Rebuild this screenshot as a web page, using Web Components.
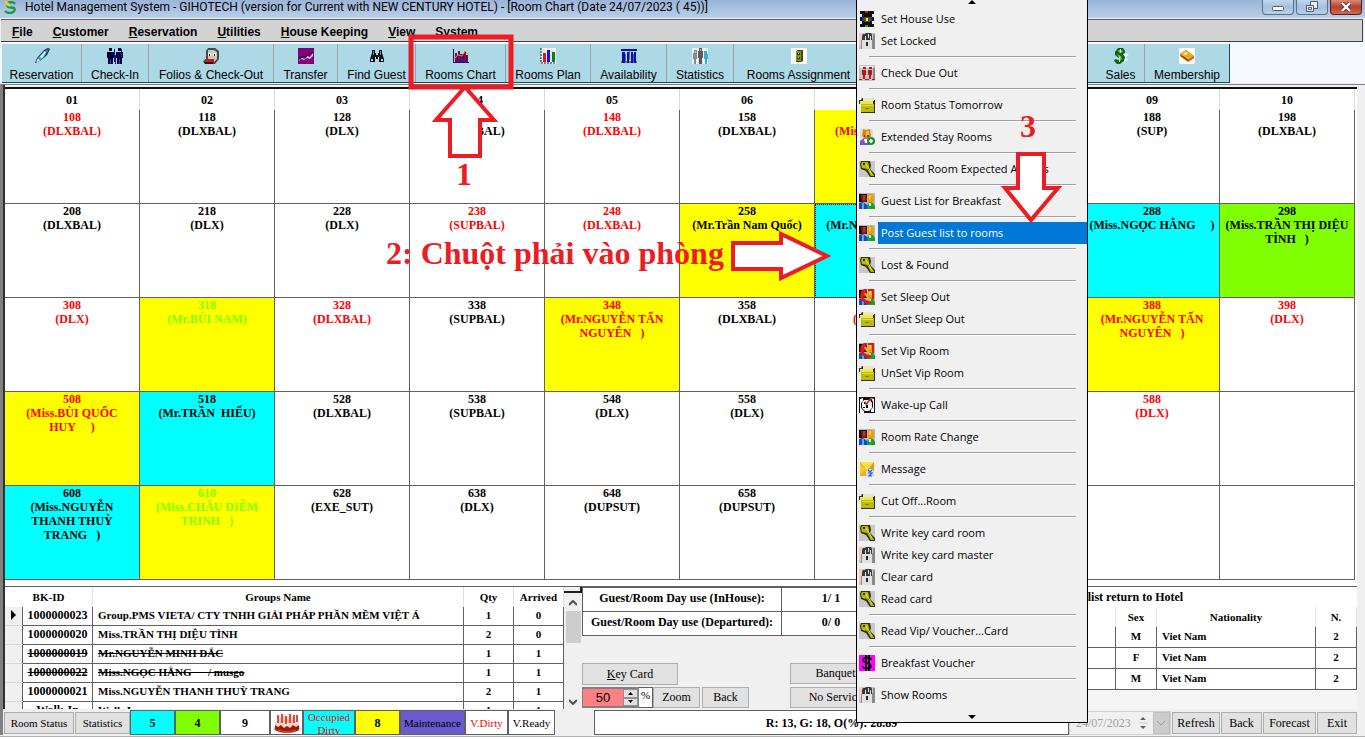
<!DOCTYPE html>
<html lang="vi">
<head>
<meta charset="utf-8">
<title>Hotel Management System - GIHOTECH</title>
<style>
body{margin:0;background:#f0f0f0;font-family:"Liberation Serif",serif;font-size:12px;color:#000;overflow:hidden}
</style>
</head>
<body>
<hotel-app></hotel-app>
<script>
const BASE = `*{box-sizing:border-box} :host{display:block} button{font:inherit;color:inherit;margin:0;padding:0;cursor:default}`;
function define(name, css, html){
  customElements.define(name, class extends HTMLElement{
    constructor(){ super(); this.attachShadow({mode:'open'}); }
    connectedCallback(){
      this.shadowRoot.innerHTML = `<style>${BASE}${css}</style>` + (typeof html === 'function' ? html(this) : html);
    }
  });
}

/* ---------- icons, all on a 16 unit grid ---------- */
const people = `<rect width="16" height="16" fill="#b8b8b8"/><path d="M0 1h8v8H0z" fill="#111"/><path d="M2 2h5l1 4-2 3H3z" fill="#8a1f10"/><path d="M4 2h2v5H4z" fill="#d02818"/><path d="M9 1h4l2 2v5l-2 2h-3L9 7z" fill="#f09a10"/><path d="M10 2h2v4h-2z" fill="#ffd030"/><path d="M0 10l4-1 4 3v4H0z" fill="#1848c8"/><path d="M3 10h2v6H3z" fill="#58a8ff"/><path d="M8 12l3-3 3 1 2 3v3H8z" fill="#18a030"/><path d="M10 10h2v3h-2z" fill="#e8f8e0"/>`;
const ICONS = {
  pen:`<path d="M1 15l2-5 7-8 4-2 2 1-3 6-7 6z" fill="#111850"/><path d="M4 10l6-7 3 1-3 5-4 4z" fill="#38b8c8"/><path d="M6 9l5-6 1 1-4 6z" fill="#d8ffff"/><path d="M2 14l2-4 2 3z" fill="#fff"/><path d="M11 2l4-1-2 4z" fill="#5070c0"/>`,
  pair:`<path d="M2 0h3v3H2zM0 4h7v6H6v6H1v-6H0zM11 0h3v3h-3zM9 4h7v6h-1v6h-5v-6H9z" fill="#000030"/><path d="M7 1h1v13H7zM8 7h1v9H8zM14 1h1v9h-1z" fill="#1018a0"/><path d="M3 11h1v5H3zM12 11h1v5h-1z" fill="#3848a0"/>`,
  face:`<path d="M5 0h7l4 3v8l-4 5H2l-2-3 3-2V3z" fill="#484848"/><path d="M5 2h6l3 2v7l-3 3H5z" fill="#c8c8b8"/><path d="M5 5h3v3H5zM10 5h3v3h-3z" fill="#fff"/><path d="M6 6h1v2H6zM11 6h1v2h-1z" fill="#000"/><path d="M2 11h9v3H3z" fill="#d01818"/><path d="M1 14h9v2H2z" fill="#400"/>`,
  transfer:`<rect width="16" height="16" fill="#800080"/><path d="M1 12l3-2 3 1 2-3 3 1 3-4v3l-3 3-3-1-3 2-3-1-2 2z" fill="#ccc"/><path d="M1 10l4-2 3 1 3-3 4-2" stroke="#111" fill="none"/>`,
  binoc:`<path d="M3 2h3v3h1v2h2V5h1V2h3v3l2 6v3h-5V9H9v2H7V9H6v5H1v-3l2-6z" fill="#101018"/><path d="M4 3h1v4H4zM11 3h1v4h-1z" fill="#6880a0"/><path d="M2 11h2v2H2zM12 11h2v2h-2z" fill="#ccd"/>`,
  chart:`<path d="M0 1h1v13h15v1H0z" fill="#101080"/><path d="M2 5h2v9H2zM5 3h2v11H5zM8 6h2v8H8zM11 3h2v11h-2zM14 7h1v7h-1z" fill="#900040"/><path d="M4 7h1v7H4zM7 6h1v8H7zM10 6h1v8h-1zM13 7h1v7h-1z" fill="#1818a8"/><path d="M1 11l4-4 4 1 3-5 4 4" stroke="#e89020" fill="none"/>`,
  bars:`<rect x="1" y="0" width="15" height="16" fill="#fff"/><path d="M1 3h15M1 7h15M1 11h15M4 0v16M8 0v16M12 0v16" stroke="#bbb" stroke-width=".6"/><path d="M1 0v15h15" fill="none" stroke="#111" stroke-dasharray="2 1"/><path d="M3 5h3v9H3z" fill="#f01010"/><path d="M7 2h3v12H7z" fill="#1010f0"/><path d="M12 4h3v10h-3z" fill="#008020"/>`,
  avail:`<path d="M0 1h16v2H0zM1 4h3v11H1zM6 4h2v11H6zM10 4h2v11h-2zM13 4h2v11h-2z" fill="#1010a0"/><path d="M4 6h1v7H4zM8 3h1v9H8zM12 6h1v8h-1z" fill="#5060d8"/><path d="M0 13h16v2H0z" fill="#1010a0" opacity=".5"/>`,
  crowd:`<rect width="16" height="16" fill="#e8f0f0"/><path d="M2 2h3v3H2zM1 5h4v6H4v5H2v-5H1z" fill="#889"/><path d="M7 0h3v3H7zM6 3h5v7h-1v6H7v-6H6z" fill="#555c60"/><path d="M8 3h1v4H8z" fill="#d03030"/><path d="M12 3h3v3h-3zM12 6h4v5h-1v5h-2v-5h-1z" fill="#38b0d0"/><path d="M8 1h1v2H8zM3 3h1v2H3z" fill="#e8b898"/>`,
  safe:`<rect width="16" height="16" fill="#fff"/><path d="M5 3l2-1h5v11l-2 1H5z" fill="#484800"/><path d="M5 3h5v10H5z" fill="#8c8c10"/><path d="M6 5h3v2H6zM6 9h3v2H6z" fill="#333"/><path d="M7 5h1v1H7zM7 9h1v1H7z" fill="#ee6"/>`,
  dollar3d:`<path d="M9 5l7 1-3 3 2 3-6 3z" fill="#e8f4f4"/><path d="M5 0h5l2 3v2l-2 1 2 3-1 4-4 3H4l-3-3 1-2 3 1 2-1-5-4V4z" fill="#185c18"/><path d="M5 2h4l1 2-4 1zM4 6l4 2 1 3-2 2-2-1 1-2z" fill="#58c850"/><path d="M7 1h1v4H7zM6 9h1v5H6z" fill="#c8f0b8"/>`,
  card:`<rect width="16" height="16" fill="#fff"/><path d="M1 6l6-4 8 6v2l-6 4-8-6z" fill="#a86010"/><path d="M1 6l6-4 8 6-6 4z" fill="#f0a828"/><path d="M4 6l3-2 2 1-3 2z" fill="#fff0b0"/><path d="M3 8l6 4" stroke="#704008"/>`,
  gear:`<rect x="1" width="14" height="16" fill="#101010"/><path d="M1 3h2v3H1zM1 10h2v3H1zM13 3h2v3h-2zM13 10h2v3h-2z" fill="#f0f0f0"/><path d="M6 0h3v2H6z" fill="#c02020"/><path d="M6 14h3v2H6z" fill="#20b020"/><path d="M3 6h2v4H3zM11 6h2v4h-2z" fill="#3030b0"/><path d="M5 6h6v5H5z" fill="#505010"/><path d="M7 7h2v3H7z" fill="#ff3"/>`,
  lock:`<rect width="16" height="16" fill="#c8c8c8"/><path d="M0 0h3v13H0z" fill="#f8c8c8"/><path d="M4 1h2l1-1h5l1 2v5H3V3z" fill="#383838"/><path d="M6 3h1v4H6zM9 1h1v4H9zM11 3h1v4h-1z" fill="#ddd"/><path d="M3 7h10v9H3z" fill="#e0e0e0"/><path d="M2 7h1v9H2zM13 6h1v10h-1z" fill="#8c8c8c"/><path d="M14 1h2v15h-2z" fill="#888"/><path d="M7 9h2v4H7z" fill="#282828"/>`,
  due:`<rect width="16" height="16" fill="#c4c4c4"/><path d="M1 1h13v2H1z" fill="#ececec"/><path d="M4 2h3v2H4zM3 5h4v5H6v4H4v-4H3zM10 2h3v2h-3zM9 5h4v5h-1v4h-2v-4H9z" fill="#b01818"/><path d="M0 14h3v1H0zM6 14h4v1H6zM13 14h3v1h-3z" fill="#b01818"/><path d="M14 3h2v11h-2z" fill="#888"/>`,
  folder:`<path d="M0 3h2l1-2h12v2h1v13H2V7H0z" fill="#30300c"/><path d="M4 1h11v3H4z" fill="#e8e8c8"/><path d="M1 4h13v3H1z" fill="#e8e850"/><path d="M2 7h13v8H2z" fill="#bcbc08"/><path d="M3 8h11v1H3z" fill="#e0e030"/><path d="M6 11h4v1H6z" fill="#808000"/>`,
  extend:`<rect x="1" width="13" height="16" fill="#ddd"/><path d="M4 0l3 1 4-1 1 7-2 3H6L3 7z" fill="#d88818"/><path d="M7 2h3v5H7z" fill="#f0b848"/><path d="M5 8V6h1v2zM8 8V6h2v2z" fill="#704008"/><path d="M1 12l4-3 6 2v5H1z" fill="#7858c0"/><path d="M5 10h3l1 4H6z" fill="#fff"/><circle cx="12" cy="12" r="4" fill="#189038"/><path d="M10 12h4M12 10v4" stroke="#fff" stroke-width="1.6"/>`,
  key:`<rect width="16" height="16" fill="#c8c8c8"/><path d="M2 0h9l1 5-1 3 5 5v3h-5L7 10 2 8 1 3z" fill="#303008"/><path d="M3 1h6l1 4-1 3 6 6v1h-3L8 8 3 7 2 3z" fill="#b8b808"/><path d="M4 2h2v2H4z" fill="#303008"/><path d="M7 3l2 3 4 7" stroke="#f0f040" fill="none"/>`,
  guests: people,
  sleep: people + `<path d="M8 1c-4 0-6 4-5 8 1 3 5 5 9 4" stroke="#e01818" stroke-width="3" fill="none"/><path d="M6 4l5 8" stroke="#f8b020" stroke-width="2"/><path d="M9 1h5v9" stroke="#e01818" stroke-width="2" fill="none"/>`,
  wake:`<rect width="16" height="16" fill="#101010"/><path d="M1 2l3-1v3L2 6v5l3 3v2H1zM12 1l3 1v13h-3v-2l2-3V5zM5 3h6l2 3v5l-3 3H6l-3-3V6z" fill="#f4f4f4"/><path d="M7 8h2v3H7zM5 5h1v2H5zM4 10h2v1H4z" fill="#000"/><path d="M7 8l5-7M6 5l2 3" stroke="#e01818" stroke-width="1.4"/>`,
  mail:`<rect x="1" y="1" width="14" height="14" fill="#d8a010"/><path d="M1 1h14l-7 8z" fill="#ffe048"/><path d="M1 2l7 7-7 5z" fill="#f8c828"/><path d="M1 15l6-6 8 6z" fill="#f0b018"/><circle cx="11" cy="12" r="4" fill="#d0e4ff"/><path d="M9 9l2 2 2-2M9 12h4l-3 3h3" stroke="#2060d0" fill="none" stroke-width="1.2"/>`,
  money:`<rect width="16" height="16" fill="#ff00ff"/><path d="M12 5V4c-1-2-8-2-8 1s8 3 8 6-7 3-8 1v-1M7 0v16M10 0v16" stroke="#000" stroke-width="1.7" fill="none"/>`,
  cake:`<rect width="30" height="22" fill="#fff"/><ellipse cx="15" cy="17" rx="14" ry="4" fill="#c8d0e0"/><path d="M3 11h24v6c-2 5-22 5-24 0z" fill="#a01808"/><path d="M3 10c5-3 19-3 24 0v3l-3 2-3-2-3 3-3-2-3 2-3-3-3 2-3-2z" fill="#f4d8c8"/><path d="M6 3v8M10 2v9M14 4v8M18 2v9M22 3v8M25 3v7" stroke="#e04848" stroke-width="2"/><path d="M8 5v6M12 3v7M16 5v6M20 4v7" stroke="#f0a090" stroke-width="1"/><path d="M6 18c5 2 13 2 18 0" stroke="#e85028" fill="none"/>`
};
define('px-icon', `:host{display:block;width:16px;height:16px;flex:none} svg{display:block;width:100%;height:100%}`,
  el => `<svg viewBox="0 0 ${el.getAttribute('box') || '16 16'}" aria-hidden="true">${ICONS[el.getAttribute('name')]}</svg>`);

/* ---------- title bar ---------- */
define('title-bar', `
:host{display:flex;align-items:flex-start;height:18px;background:linear-gradient(#9ab5d8,#b8cfe9);padding:0 3px 0 4px}
.logo{width:12px;height:14px;margin-right:9px}
h1{flex:1;margin:0;font:12px/14px Roboto,sans-serif;white-space:nowrap}
.win{display:flex;gap:2px}
button{width:32px;height:15px;border:1px solid #56718f;border-top:0;border-radius:0 0 4px 4px;background:linear-gradient(#c3d5ea,#a6bfdc 50%,#b9d0ea);display:grid;place-items:center}
.close{background:linear-gradient(#dc8a78,#b8402c 50%,#cf6a50);border-color:#5a1c14}
svg{display:block}`,
`<svg class="logo" viewBox="0 0 12 14" aria-hidden="true"><path d="M11 4C9 1 3 2 3 5s3 2 7 3c2 2-1 5-4 5-2 0-4-1-5-2" fill="none" stroke="#189848" stroke-width="2.4"/><path d="M0 0l5 3 1 4-4-2z" fill="#f0d020"/></svg>
<h1>Hotel Management System - GIHOTECH (version for Current with NEW CENTURY HOTEL) - [Room Chart (Date 24/07/2023 ( 45))]</h1>
<div class="win">
<button aria-label="Minimize"><svg width="12" height="10"><rect x=".5" y="4.500" width="11" height="4" rx="1" fill="#fff" stroke="#505a68"/></svg></button>
<button aria-label="Restore"><svg width="12" height="12" fill="#e8eef6" stroke="#505a68"><path d="M4.500 .500h7v7h-7z"/><path d="M.500 4.500h7v6h-7zM2.500 6.500h3v2h-3z"/></svg></button>
<button class="close" aria-label="Close"><svg width="12" height="10"><path d="M2 1l8 8M10 1L2 9" stroke="#5a3030" stroke-width="4"/><path d="M2 1l8 8M10 1L2 9" stroke="#fff" stroke-width="2.400"/></svg></button>
</div>`);

/* ---------- menu bar ---------- */
define('menu-bar', `
:host{display:block;border-top:1px solid #606060;border-bottom:1px solid #404040;border-right:1px solid #404040;margin:1px 2px 0 1px;background:#d3d3d3}
nav{display:flex;gap:20px;height:21px;align-items:center;padding:2px 11px 0;font:bold 12px/16px "Liberation Sans",sans-serif}
a{color:#000;text-decoration:none}`,
`<nav>${['File','Customer','Reservation','Utilities','House Keeping','View','System'].map(t=>`<a href="#"><u>${t[0]}</u>${t.slice(1)}</a>`).join('')}</nav>`);

/* ---------- toolbar ---------- */
define('tool-bar', `
:host{display:block;background:#f5f8fe;padding:2px 0 0 2px;height:41px}
.row{display:grid;width:max-content;grid-template-columns:80px 67px 125px 64px 78px 90px 85px 76px 67px 130px 233px 48px 84px;background:#add8e6;border-right:1px solid #1c4a60;border-bottom:1px solid #1c4a60}
button{height:38px;border:0;border-right:1px solid #a0a0a0;background:none;display:flex;flex-direction:column;align-items:center;gap:4px;padding-top:4px;white-space:nowrap;font:12px/14px "Liberation Sans",sans-serif}
button:last-child{border:0}`,
`<div class="row">${[['pen','Reservation'],['pair','Check-In'],['face','Folios & Check-Out'],['transfer','Transfer'],['binoc','Find Guest'],['chart','Rooms Chart'],['bars','Rooms Plan'],['avail','Availability'],['crowd','Statistics'],['safe','Rooms Assignment'],null,['dollar3d','Sales'],['card','Membership']].map(i=>i?`<button><px-icon name="${i[0]}"></px-icon>${i[1].replace('&','&amp;')}</button>`:'<span></span>').join('')}</div>`);

/* ---------- room chart ---------- */
const R='r',K='k',G='g';
const N='\u00a0';
const ROWS = [
 [['108\n(DLXBAL)',R],['118\n(DLXBAL)'],['128\n(DLX)'],['138\n(SUPBAL)'],['148\n(DLXBAL)',R],['158\n(DLXBAL)'],['168\n(Miss.NGUYỄN T',R,'y'],[''],['188\n(SUP)'],['198\n(DLXBAL)']],
 [['208\n(DLXBAL)'],['218\n(DLX)'],['228\n(DLX)'],['238\n(SUPBAL)',R],['248\n(DLXBAL)',R],['258\n(Mr.Trần Nam Quốc)',K,'y'],['268\n(Mr.NGUYỄN MINH',K,'c sel'],[''],[`288\n(Miss.NGỌC HẰNG${N.repeat(5)})`,K,'c'],[`298\n(Miss.TRẦN THỊ DIỆU\nTÌNH${N.repeat(3)})`,K,'l']],
 [['308\n(DLX)',R],['318\n(Mr.BÙI NAM)',G,'y'],['328\n(DLXBAL)',R],['338\n(SUPBAL)'],[`348\n(Mr.NGUYỄN TẤN\nNGUYÊN${N.repeat(3)})`,R,'y'],['358\n(DLXBAL)'],['368\n(DLXBAL)',R],[''],[`388\n(Mr.NGUYỄN TẤN\nNGUYÊN${N.repeat(3)})`,R,'y'],['398\n(DLX)',R]],
 [[`508\n(Miss.BÙI QUỐC\nHUY${N.repeat(5)})`,R,'y'],['518\n(Mr.TRẦN  HIẾU)',K,'c'],['528\n(DLXBAL)'],['538\n(SUPBAL)'],['548\n(DLX)'],['558\n(DLX)'],[''],[''],['588\n(DLX)',R],['']],
 [[`608\n(Miss.NGUYỄN\nTHANH THUỲ\nTRANG${N.repeat(3)})`,K,'c'],[`618\n(Miss.CHÂU DIỄM\nTRINH${N.repeat(3)})`,G,'y'],['628\n(EXE_SUT)'],['638\n(DLX)'],['648\n(DUPSUT)'],['658\n(DUPSUT)'],[''],[''],[''],['']]
];
define('room-chart', `
:host{display:block;background:#fff;border-top:2px solid #101010;padding-right:2px}
table{width:100%;table-layout:fixed;border-collapse:separate;border-spacing:0;text-align:center;font:bold 12px/14px "Liberation Serif",serif}
th{height:21px;padding:0;border-right:1px solid #dcdcdc}
td{height:94px;padding:0;vertical-align:top;white-space:pre;overflow:hidden;border-right:1px solid #606060;border-bottom:1px solid #606060}
.r{color:#f00}.g{color:#7fff00}.y{background:#ff0}.c{background:#0ff}.l{background:#7fff00}
.sel{outline:1px dotted #600000;outline-offset:-1px}`,
`<table><thead><tr>${['01','02','03','04','05','06','07','08','09','10'].map(h=>`<th>${h}</th>`).join('')}</tr></thead><tbody>${ROWS.map(r=>`<tr>${r.map(([t,c='k',b=''])=>`<td class="${c} ${b}">${t}</td>`).join('')}</tr>`).join('')}</tbody></table>`);

/* ---------- groups list ---------- */
const GROUPS = [
 ['1000000023','Group.PMS VIETA/ CTY TNHH GIẢI PHÁP PHẦN MỀM VIỆT Á',1,0],
 ['1000000020','Miss.TRẦN THỊ DIỆU TÌNH',2,0],
 ['1000000019','Mr.NGUYỄN MINH ĐẮC',1,1,'s'],
 ['1000000022',`Miss.NGỌC HẰNG${N.repeat(6)}/ musgo`,1,1,'s'],
 ['1000000021','Miss.NGUYỄN THANH THUỲ TRANG',2,1],
 ['Walk-In','Walk-In',1,1]];
define('group-list', `
:host{display:flex;height:122px;overflow:hidden;background:#fff}
table{flex:1;table-layout:fixed;border-collapse:separate;border-spacing:0;font:bold 11px/14px "Liberation Serif",serif;text-align:center;align-self:flex-start}
col.m{width:18px}col.id{width:70px}col.n{width:50px}
th{height:20px;padding:0;border-right:1px solid #e0e0e0}
td{height:19px;padding:0 0 2px;white-space:nowrap;border-right:1px solid #606060;border-bottom:1px solid #606060}
td:first-child{background:#f0f0f0;border-bottom-color:#d8d8d8}
td:nth-child(2){font-size:12px}
td:nth-child(3){text-align:left;padding-left:5px}
.s td:nth-child(2),.s td:nth-child(3){text-decoration:line-through}
.mark{display:block;margin:0 auto}
.bar{width:18px;background:#f0f0f0;display:flex;flex-direction:column;align-items:center}
.split{width:100%;height:6px;border-right:2px solid #202020;border-bottom:2px solid #202020;margin-bottom:7px}
.thumb{width:15px;height:32px;background:#cdcdcd;margin:5px 0 auto}
.down{margin-bottom:4px}`,
`<table><colgroup><col class="m"><col class="id"><col><col class="n"><col class="n"></colgroup>
<thead><tr><th colspan="2">BK-ID</th><th>Groups Name</th><th>Qty</th><th>Arrived</th></tr></thead>
<tbody>${GROUPS.map((g,i)=>`<tr class="${g[4]||''}"><td>${i?'':'<svg class="mark" width="5" height="10"><path d="M0 0l5 5-5 5z"/></svg>'}</td><td>${g[0]}</td><td>${g[1]}</td><td>${g[2]}</td><td>${g[3]}</td></tr>`).join('')}</tbody></table>
<div class="bar"><div class="split"></div><svg width="8" height="6"><path d="M0 5l4-4 4 4" fill="none" stroke="#505050" stroke-width="2"/></svg><div class="thumb"></div><svg class="down" width="8" height="6"><path d="M0 1l4 4 4-4" fill="none" stroke="#505050" stroke-width="2"/></svg></div>`);

/* ---------- day use and zoom controls ---------- */
define('day-use', `
:host{display:flex;flex-direction:column;justify-content:space-between;height:122px;min-width:0;padding:0 0 1px}
table{width:100%;table-layout:fixed;border-collapse:collapse;background:#fff;font:bold 12px/14px "Liberation Serif",serif;text-align:center}
th,td{height:24px;padding:0 0 3px;border:1px solid #606060}
th{width:199px}
.ctl{display:grid;grid-template-columns:auto 1fr;column-gap:41px;row-gap:2px}
.line{display:flex}
button{height:21px;border:1px solid #adadad;background:#e1e1e1}
.key{width:96px;height:22px}
.z{width:47px}.z+.z{margin-left:2px}
.spin{display:flex;width:57px;border:1px solid #808080;border-width:2px 1px;height:21px;background:#fff}
.spin input{width:40px;min-width:0;border:0;padding:0;background:#ff8080;font:13px "Liberation Sans",sans-serif;text-align:center}
.steps{flex:1;display:grid;grid-template-rows:1fr 1fr}
.steps button{height:auto;display:grid;place-items:center;border:1px solid #909090}
output{width:14px;background:#fff;border:1px solid #606060;border-left:0;font:11px/14px "Liberation Serif",serif;text-align:center}`,
`<table><tr><th scope="row">Guest/Room Day use (InHouse):</th><td>1/ 1</td></tr><tr><th scope="row">Guest/Room Day use (Departured):</th><td>0/ 0</td></tr></table>
<div class="ctl"><button class="key"><u>K</u>ey Card</button><button>Banquet</button>
<div class="line"><label class="spin"><input value="50" aria-label="Zoom percent"><span class="steps"><button aria-label="Increase"><svg width="5" height="3"><path d="M0 3l2.500-3L5 3z"/></svg></button><button aria-label="Decrease"><svg width="5" height="3"><path d="M0 0l2.500 3L5 0z"/></svg></button></span></label><output>%</output><button class="z">Zoom</button><button class="z">Back</button></div><button>No Service</button></div>`);

/* ---------- guests returning ---------- */
define('return-list', `
:host{display:block;height:122px;background:#f5f5f5;font:bold 11px/14px "Liberation Serif",serif}
table{width:100%;table-layout:fixed;border-collapse:separate;border-spacing:0;background:#fff;text-align:center}
caption{height:20px;font-size:12px;line-height:20px;background:#fff}
th{height:20px;padding:0;border-right:1px solid #e0e0e0}
td{height:21px;padding:0 0 3px;border-right:1px solid #606060;border-bottom:1px solid #606060}
td:nth-child(3){text-align:left;padding-left:5px}
.s{width:41px}.n{width:159px}`,
`<table><caption>Guest list return to Hotel</caption><colgroup><col><col class="s"><col class="n"><col class="s"></colgroup><thead><tr><th></th><th>Sex</th><th>Nationality</th><th>N.</th></tr></thead>
<tbody>${['M','F','M'].map(s=>`<tr><td></td><td>${s}</td><td>Viet Nam</td><td>2</td></tr>`).join('')}</tbody></table>`);

/* ---------- status strip ---------- */
define('status-bar', `
:host{display:flex;height:25px;align-items:center;padding-left:1px;font:12px/14px "Liberation Serif",serif;white-space:nowrap}
button{height:22px;border:1px solid #adadad;background:#e1e1e1}
.sm{font-size:11px}
.cell{height:25px;display:grid;place-items:center;border:1px solid #606060;background:#fff;overflow:hidden}
b{font-size:12px}
.occ{white-space:normal;text-align:center;line-height:13px;color:#f00;background:#0ff}
.sum{flex:1;margin-left:39px;font-weight:bold}
.date{display:flex;align-items:center;width:102px;height:24px;border:1px solid #d0d0d0;margin-right:1px;padding-left:6px;color:#a0a0a0}
.date input{flex:1;min-width:0;border:0;padding:0;background:none;color:#a0a0a0;font:inherit}
.date button{width:17px;display:grid;place-items:center;background:#ccc;border-color:#bfbfbf}
.ud{margin-right:5px}
.end{display:flex;gap:1px}
px-icon{width:30px;height:22px}`,
`<button class="sm" style="width:70px">Room Status</button><button class="sm" style="width:55px;margin-left:1px">Statistics</button>
<div class="cell" style="width:45px;background:#0ff"><b>5</b></div><div class="cell" style="width:45px;background:#7fff00"><b>4</b></div><div class="cell" style="width:50px"><b>9</b></div>
<div class="cell" style="width:33px"><px-icon name="cake" box="30 22"></px-icon></div><div class="cell occ sm" style="width:52px">Occupied Dirty</div><div class="cell" style="width:45px;background:#ff0"><b>8</b></div>
<div class="cell sm" style="width:65px;background:#6a5acd">Maintenance</div><div class="cell sm" style="width:43px;color:#f00">V.Dirty</div><div class="cell sm" style="width:47px">V.Ready</div>
<div class="cell sum">R: 13, G: 18, O(%): 28.89</div>
<div class="date"><input value="24/07/2023" aria-label="Chart date" disabled><svg class="ud" width="9" height="16"><path d="M1 5l3-3 3 3zM1 11l3 3 3-3z" fill="#606060"/><path d="M0 8h9" stroke="#ccc"/></svg><button aria-label="Open calendar" disabled><svg width="9" height="6"><path d="M0 1l4 4 4-4" fill="none" stroke="#999"/></svg></button></div>
<div class="end"><button style="width:48px">Refresh</button><button style="width:41px">Back</button><button style="width:53px">Forecast</button><button style="width:40px">Exit</button></div>`);

/* ---------- context menu ---------- */
define('menu-entry', `
:host{display:block}
button{display:flex;width:100%;height:22px;align-items:center;border:0;background:none;text-align:left;padding-left:2px}
span{flex:1;height:22px;line-height:22px;margin-left:3px;padding-left:3px;white-space:nowrap}
:host([selected]) span{background:#0078d7;color:#fff}`,
el=>`<button role="menuitem"><px-icon name="${el.getAttribute('icon')}"></px-icon><span><slot></slot></span></button>`);
const ITEMS = [['gear','Set House Use'],['lock','Set Locked'],0,['due','Check Due Out'],0,['folder','Room Status Tomorrow'],0,['extend','Extended Stay Rooms'],0,['key','Checked Room Expected Arrivals'],0,['guests','Guest List for Breakfast'],0,['guests','Post Guest list to rooms',1],0,['key','Lost &amp; Found'],0,['sleep','Set Sleep Out'],['folder','UnSet Sleep Out'],0,['sleep','Set Vip Room'],['folder','UnSet Vip Room'],0,['wake','Wake-up Call'],0,['guests','Room Rate Change'],0,['mail','Message'],0,['folder','Cut Off...Room'],0,['key','Write key card room'],['lock','Write key card master'],['lock','Clear card'],['key','Read card'],0,['key','Read Vip/ Voucher...Card'],0,['money','Breakfast Voucher'],0,['lock','Show Rooms']];
define('context-menu', `
:host{display:block;position:absolute;left:856px;top:0;width:232px;background:#f0f0f0;border:1px solid #000;border-top:0;font:11px/22px "Open Sans",sans-serif}
.arrow{display:flex;justify-content:center;height:8px}
.arrow.down{height:16px;align-items:center;padding-top:6px}
hr{height:10px;margin:0 11px 0 12px;border:0;background:linear-gradient(#a0a0a0,#a0a0a0) 0 4px/100% 1px no-repeat,linear-gradient(#fff,#fff) 0 5px/100% 1px no-repeat}`,
`<div class="arrow"><svg width="8" height="4"><path d="M0 4l4-4 4 4z"/></svg></div><div role="menu">${ITEMS.map(i=>i?`<menu-entry icon="${i[0]}" ${i[2]?'selected':''}>${i[1]}</menu-entry>`:'<hr>').join('')}</div><div class="arrow down"><svg width="8" height="4"><path d="M0 0l4 4 4-4z"/></svg></div>`);

/* ---------- step annotations drawn over the window ---------- */
define('step-notes', `
:host{display:block;position:absolute;left:0;top:0;pointer-events:none;color:#ed1c24;font:bold 32px/36px "Liberation Serif",serif;white-space:nowrap}
svg{display:block}
p{position:absolute;margin:0}
.one{left:456px;top:156px}.two{left:386px;top:235px}.three{left:1020px;top:108px}`,
`<svg width="1080" height="290" stroke="#ed1c24" stroke-width="5" fill="none"><rect x="411" y="37" width="100" height="50"/><g fill="#fff" stroke-width="4"><path d="M465 87l29 33h-14v36h-30v-36h-14z"/><path d="M733 243h48v-9l46 22-46 22v-9h-48z"/><path d="M1018 154h26v34h14l-27 32-26-32h13z"/></g></svg>
<p class="one">1</p><p class="two">2: Chuột phải vào phòng</p><p class="three">3</p>`);

/* ---------- shell ---------- */
define('hotel-app', `
:host{display:block;position:relative}
main{margin-top:1px;border-top:1px solid #808080;border-left:3px solid #808080;padding-right:8px;background:#f0f0f0}
.in{border-left:2px solid #303030;padding-top:2px}
.gap{height:6px;background:#fff}
.panel{display:grid;grid-template-columns:577px 1fr 476px;border-top:1px solid #606060}
status-bar{margin-top:1px}
.foot{height:4px;background:#fff;border-top:1px solid #b0b0b0;margin-top:1px}`,
`<title-bar></title-bar><menu-bar></menu-bar><tool-bar></tool-bar>
<main><div class="in"><room-chart></room-chart><div class="gap"></div><div class="panel"><group-list></group-list><day-use></day-use><return-list></return-list></div></div><status-bar></status-bar></main><div class="foot"></div>
<context-menu></context-menu><step-notes></step-notes>`);
</script>
</body>
</html>
